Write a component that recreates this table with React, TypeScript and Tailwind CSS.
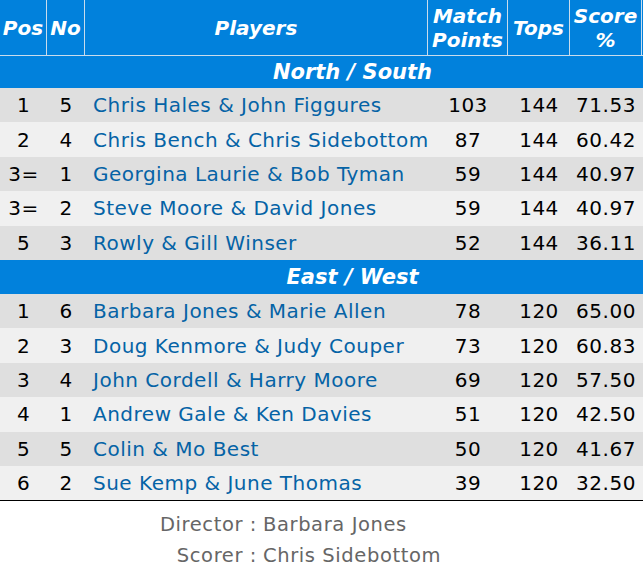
import React from "react";

type Row = { pos: string; no: number; players: string; mp: number; tops: number; score: string };

const northSouth: Row[] = [
  { pos: "1", no: 5, players: "Chris Hales & John Figgures", mp: 103, tops: 144, score: "71.53" },
  { pos: "2", no: 4, players: "Chris Bench & Chris Sidebottom", mp: 87, tops: 144, score: "60.42" },
  { pos: "3=", no: 1, players: "Georgina Laurie & Bob Tyman", mp: 59, tops: 144, score: "40.97" },
  { pos: "3=", no: 2, players: "Steve Moore & David Jones", mp: 59, tops: 144, score: "40.97" },
  { pos: "5", no: 3, players: "Rowly & Gill Winser", mp: 52, tops: 144, score: "36.11" },
];

const eastWest: Row[] = [
  { pos: "1", no: 6, players: "Barbara Jones & Marie Allen", mp: 78, tops: 120, score: "65.00" },
  { pos: "2", no: 3, players: "Doug Kenmore & Judy Couper", mp: 73, tops: 120, score: "60.83" },
  { pos: "3", no: 4, players: "John Cordell & Harry Moore", mp: 69, tops: 120, score: "57.50" },
  { pos: "4", no: 1, players: "Andrew Gale & Ken Davies", mp: 51, tops: 120, score: "42.50" },
  { pos: "5", no: 5, players: "Colin & Mo Best", mp: 50, tops: 120, score: "41.67" },
  { pos: "6", no: 2, players: "Sue Kemp & June Thomas", mp: 39, tops: 120, score: "32.50" },
];

const cols = "grid grid-cols-[47px_38px_343px_80px_62px_72px_1fr]";

function HeadCell({ children, className = "" }: { children: React.ReactNode; className?: string }) {
  return (
    <div
      className={`flex items-center justify-center border-r border-[#c9dcec] text-center leading-[24px] ${className}`}
    >
      {children}
    </div>
  );
}

function Section({ title, h }: { title: string; h: string }) {
  return (
    <div
      className={`flex items-center justify-center bg-[#0181dc] pl-[62px] pt-[2px] text-[21px] font-bold italic text-white ${h}`}
    >
      {title}
    </div>
  );
}

function Body({ rows }: { rows: Row[] }) {
  return (
    <>
      {rows.map((r, i) => (
        <div
          key={i}
          className={`${cols} h-[34.4px] items-center text-[20px] tracking-[0.5px] text-black ${
            i % 2 === 0 ? "bg-[#dfdfdf]" : "bg-[#f0f0f0]"
          }`}
        >
          <div className="text-center">{r.pos}</div>
          <div className="text-center">{r.no}</div>
          <div className="whitespace-nowrap pl-2 text-[#0563a6]">{r.players}</div>
          <div className="text-center">{r.mp}</div>
          <div className="text-center">{r.tops}</div>
          <div className="text-center">{r.score}</div>
          <div />
        </div>
      ))}
    </>
  );
}

export default function App() {
  return (
    <div className="w-[643px] bg-white font-['DejaVu_Sans',sans-serif]">
      <div className={`${cols} h-[56px] border-b border-[#c9dcec] bg-[#0181dc] text-[20px] font-bold italic text-white`}>
        <HeadCell>Pos</HeadCell>
        <HeadCell>No</HeadCell>
        <HeadCell>Players</HeadCell>
        <HeadCell>
          Match
          <br />
          Points
        </HeadCell>
        <HeadCell>Tops</HeadCell>
        <HeadCell>
          Score
          <br />%
        </HeadCell>
        <div />
      </div>

      <Section title="North / South" h="h-[32px]" />
      <Body rows={northSouth} />
      <Section title="East / West" h="h-[34px]" />
      <div className="border-b border-black">
        <Body rows={eastWest} />
      </div>

      <div className="grid grid-cols-[257px_1fr] pt-[8px] text-[19.5px] leading-[31px] tracking-[0.6px] text-[#666666]">
        <div className="text-right">Director :</div>
        <div className="pl-[6px]">Barbara Jones</div>
        <div className="text-right">Scorer :</div>
        <div className="pl-[6px]">Chris Sidebottom</div>
      </div>
    </div>
  );
}
